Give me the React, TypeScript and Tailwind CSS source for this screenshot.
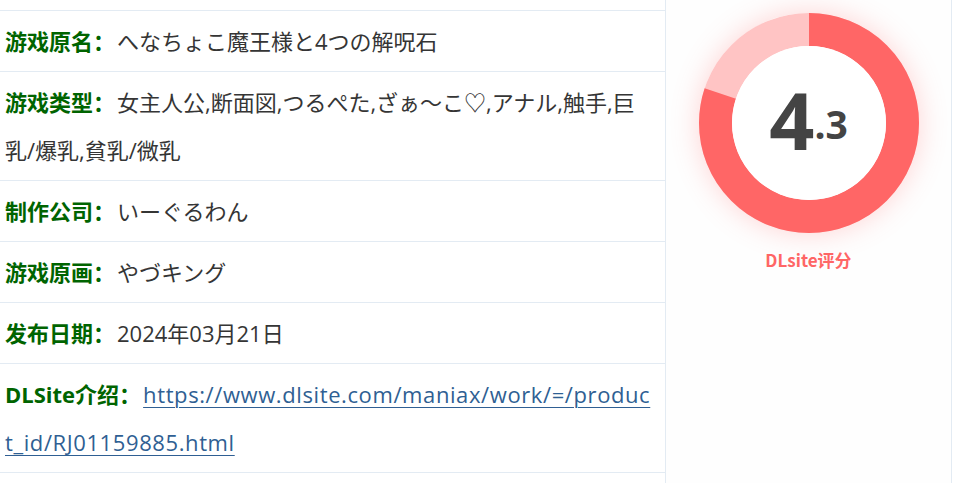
import React from "react";

const rows: { label: string; value: string; link?: boolean }[] = [
  { label: "游戏原名：", value: "へなちょこ魔王様と4つの解呪石" },
  {
    label: "游戏类型：",
    value: "女主人公,断面図,つるぺた,ざぁ～こ♡,アナル,触手,巨乳/爆乳,貧乳/微乳",
  },
  { label: "制作公司：", value: "いーぐるわん" },
  { label: "游戏原画：", value: "やづキング" },
  { label: "发布日期：", value: "2024年03月21日" },
  {
    label: "DLSite介绍：",
    value: "https://www.dlsite.com/maniax/work/=/product_id/RJ01159885.html",
    link: true,
  },
];

export default function App() {
  const r = 93.5;
  const c = 2 * Math.PI * r;
  const pct = 0.8;
  return (
    <div className="w-[953px] h-[483px] overflow-hidden bg-white flex">
      <div className="w-[666px] border-r border-[#e3ebf3] flex flex-col">
        <div className="h-[11px] border-b border-[#e3ebf3]" />
        {rows.map((row) => (
          <div
            key={row.label}
            className="border-b border-[#e3ebf3] pl-[5px] pr-[9px] py-[6px] leading-[48px] text-[22px] text-[#353535] break-all font-['Open_Sans','Noto_Sans_CJK_JP',sans-serif]"
          >
            <span className="font-bold text-[#006400] mr-[2px] font-['Open_Sans','Noto_Sans_CJK_SC',sans-serif]">
              {row.label}
            </span>
            {row.link ? (
              <a
                className="text-[#2f5f93] underline underline-offset-[4px] decoration-1 tracking-[0.6px]"
                href="#"
              >
                {row.value}
              </a>
            ) : (
              <span>{row.value}</span>
            )}
          </div>
        ))}
      </div>
      <div className="w-[286px] border-r border-[#e3ebf3] bg-[#fefefe] flex flex-col items-center pt-[13px]">
        <div className="relative w-[220px] h-[220px] rounded-full shadow-[0_0_28px_rgba(255,102,102,0.28)]">
          <svg width="220" height="220" viewBox="0 0 220 220" className="absolute inset-0">
            <circle cx="110" cy="110" r={r} fill="none" stroke="#ffc4c4" strokeWidth="33" />
            <circle
              cx="110"
              cy="110"
              r={r}
              fill="none"
              stroke="#ff6666"
              strokeWidth="33"
              strokeDasharray={`${c * pct} ${c}`}
              transform="rotate(-90 110 110)"
            />
            <circle cx="110" cy="110" r="77" fill="#ffffff" />
          </svg>
          <div className="absolute inset-0 flex items-center justify-center">
            <div className="flex items-end text-[#444444] font-['Open_Sans',sans-serif] font-bold mt-[-8px]">
              <span className="text-[79px] leading-none">4</span>
              <span className="text-[39px] leading-none mb-[16px]">.3</span>
            </div>
          </div>
        </div>
        <div className="mt-[14px] text-[17px] font-bold text-[#ff6666] font-['Noto_Sans_CJK_SC',sans-serif]">
          DLsite评分
        </div>
      </div>
    </div>
  );
}
